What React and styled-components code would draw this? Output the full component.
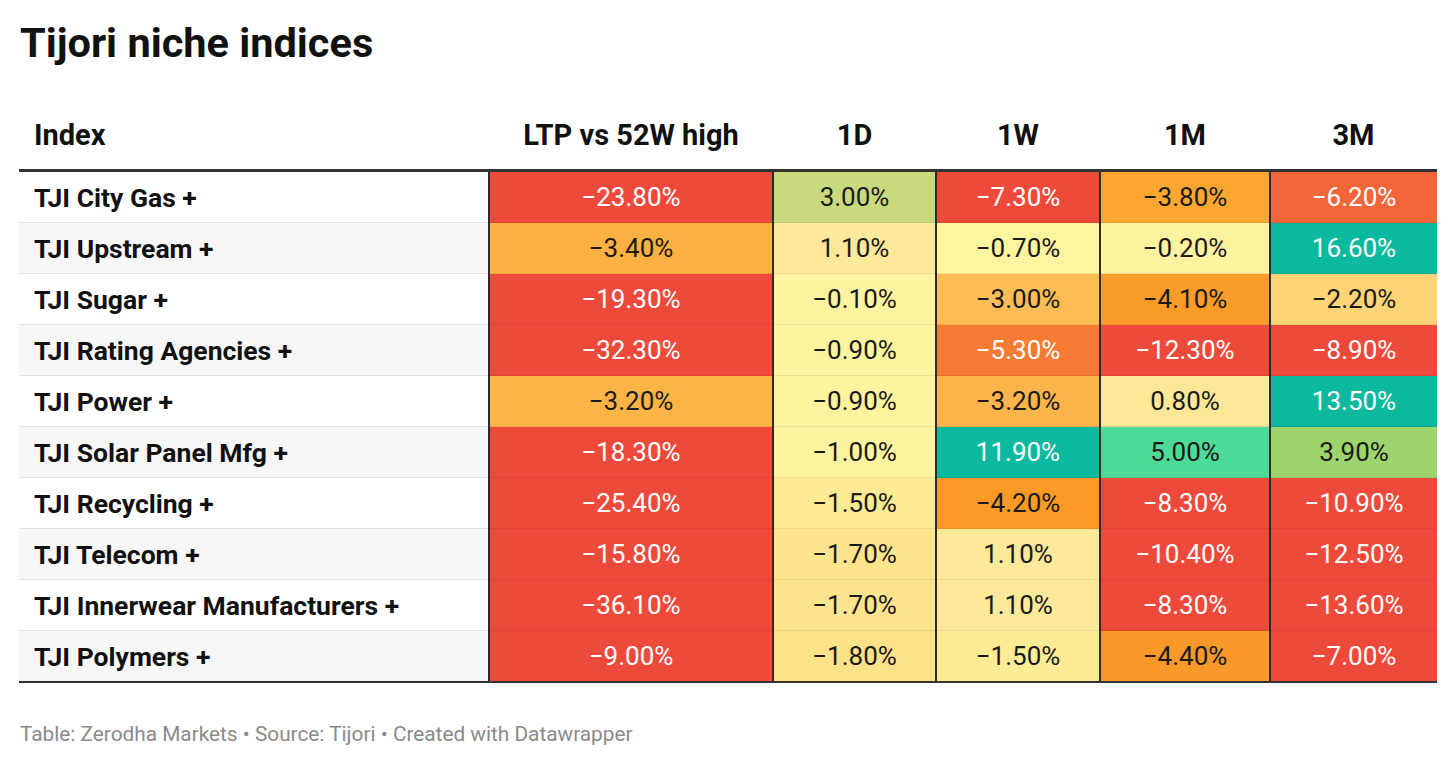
import styled, { createGlobalStyle } from "styled-components"

const GlobalStyle = createGlobalStyle`
  body {
    margin: 0;
    background: #ffffff;
    font-family: Roboto, "Liberation Sans", sans-serif;
    color: #181818;
  }
`

const RED = "#EE4A3B"

const rows = [
  ["TJI City Gas +", [["−23.80%", RED, 1], ["3.00%", "#C9DA7E"], ["−7.30%", RED, 1], ["−3.80%", "#FDA631"], ["−6.20%", "#F26639", 1]]],
  ["TJI Upstream +", [["−3.40%", "#FDB143"], ["1.10%", "#FEE99A"], ["−0.70%", "#FEF59E"], ["−0.20%", "#FEF39E"], ["16.60%", "#0BB99E", 1]]],
  ["TJI Sugar +", [["−19.30%", RED, 1], ["−0.10%", "#FEF49F"], ["−3.00%", "#FDBC56"], ["−4.10%", "#FC9C28"], ["−2.20%", "#FED477"]]],
  ["TJI Rating Agencies +", [["−32.30%", RED, 1], ["−0.90%", "#FEF39E"], ["−5.30%", "#F67B32", 1], ["−12.30%", RED, 1], ["−8.90%", RED, 1]]],
  ["TJI Power +", [["−3.20%", "#FDB446"], ["−0.90%", "#FEF39E"], ["−3.20%", "#FDB44A"], ["0.80%", "#FEE799"], ["13.50%", "#0BB99E", 1]]],
  ["TJI Solar Panel Mfg +", [["−18.30%", RED, 1], ["−1.00%", "#FEF39E"], ["11.90%", "#0BB99E", 1], ["5.00%", "#4DDA97"], ["3.90%", "#9ED46D"]]],
  ["TJI Recycling +", [["−25.40%", RED, 1], ["−1.50%", "#FEEA92"], ["−4.20%", "#FC9A28"], ["−8.30%", RED, 1], ["−10.90%", RED, 1]]],
  ["TJI Telecom +", [["−15.80%", RED, 1], ["−1.70%", "#FEE48C"], ["1.10%", "#FEE99A"], ["−10.40%", RED, 1], ["−12.50%", RED, 1]]],
  ["TJI Innerwear Manufacturers +", [["−36.10%", RED, 1], ["−1.70%", "#FEE48C"], ["1.10%", "#FEE99A"], ["−8.30%", RED, 1], ["−13.60%", RED, 1]]],
  ["TJI Polymers +", [["−9.00%", RED, 1], ["−1.80%", "#FEE287"], ["−1.50%", "#FEEC94"], ["−4.40%", "#FB982A"], ["−7.00%", RED, 1]]],
]

const columns = [
  { label: "Index", width: 470 },
  { label: "LTP vs 52W high", width: 284 },
  { label: "1D", width: 163 },
  { label: "1W", width: 164 },
  { label: "1M", width: 170 },
  { label: "3M", width: 167 },
]

const Page = styled.div`
  padding: 14px 19px 0 19px;
  width: 1418px;
`

const Title = styled.h1`
  margin: 0 0 0 1px;
  font-size: 41.5px;
  font-weight: 700;
  line-height: 58px;
  color: #111;
`

const Table = styled.table`
  margin-top: 36px;
  width: 1418px;
  border-collapse: collapse;
  table-layout: fixed;
`

const HeadCell = styled.th`
  height: 53px;
  padding: 0 15px 8px 15px;
  font-size: 29px;
  font-weight: 700;
  text-align: ${p => (p.$left ? "left" : "center")};
  vertical-align: middle;
  color: #111;
  border-bottom: 3px solid #333;
`

const Row = styled.tr`
  background: ${p => (p.$alt ? "#f7f7f7" : "#ffffff")};
  &:last-child td {
    border-bottom: 2px solid #333;
  }
`

const NameCell = styled.td`
  height: 50px;
  padding: 0 15px;
  font-size: 26.5px;
  font-weight: 700;
  color: #111;
  border-bottom: 1px solid #e2e2e2;
  white-space: nowrap;
`

const ValueCell = styled.td`
  height: 50px;
  padding: 0;
  text-align: center;
  font-size: 26px;
  font-weight: 400;
  background: ${p => p.$bg};
  color: ${p => (p.$light ? "#ffffff" : "#1a1a1a")};
  border-left: 2px solid #2b2b2b;
  border-bottom: 1px solid rgba(0, 0, 0, 0.07);
`

const Footer = styled.div`
  margin-top: 39px;
  margin-left: 1px;
  font-size: 20.8px;
  color: #8a8a8a;
`

export default function App() {
  return (
    <>
      <GlobalStyle />
      <Page>
        <Title>Tijori niche indices</Title>
        <Table>
          <colgroup>
            {columns.map(c => <col key={c.label} style={{ width: c.width }} />)}
          </colgroup>
          <thead>
            <tr>
              {columns.map((c, i) => (
                <HeadCell key={c.label} $left={i === 0}>{c.label}</HeadCell>
              ))}
            </tr>
          </thead>
          <tbody>
            {rows.map(([name, cells], r) => (
              <Row key={name} $alt={r % 2 === 1}>
                <NameCell>{name}</NameCell>
                {cells.map(([v, bg, light], c) => (
                  <ValueCell key={c} $bg={bg} $light={light}>{v}</ValueCell>
                ))}
              </Row>
            ))}
          </tbody>
        </Table>
        <Footer>Table: Zerodha Markets • Source: Tijori • Created with Datawrapper</Footer>
      </Page>
    </>
  )
}
